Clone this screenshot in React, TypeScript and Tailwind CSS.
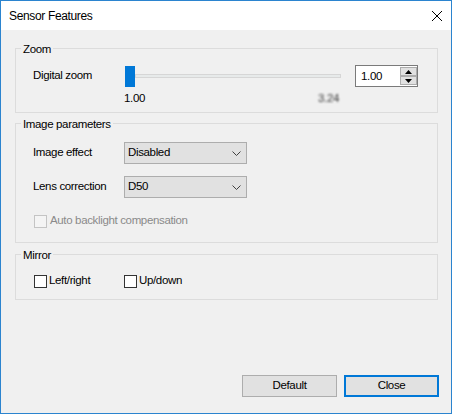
import { ReactNode } from 'react';

const FONT = "font-['Liberation_Sans',Arial,sans-serif] text-[11.5px] tracking-[-0.35px] text-black";

function GroupBox({ title, className, children }: { title: string; className?: string; children: ReactNode }) {
  return (
    <div className={`flex flex-col border border-[#dcdcdc] ${className ?? ''}`}>
      <div className="-mt-[8px] ml-[5px] h-4 self-start bg-[#f0f0f0] px-[2px] leading-4">{title}</div>
      {children}
    </div>
  );
}

function Chevron() {
  return (
    <svg width="9" height="5" viewBox="0 0 9 5" className="shrink-0">
      <path d="M0.5 0.5 L4.5 4.5 L8.5 0.5" fill="none" stroke="#404040" strokeWidth="1" />
    </svg>
  );
}

function Dropdown({ value }: { value: string }) {
  return (
    <div className="flex h-[22px] w-[123px] items-center justify-between border border-[#adadad] bg-[#e1e1e1] pl-[3px] pr-[5px]">
      <span>{value}</span>
      <Chevron />
    </div>
  );
}

function CheckBox({ label, disabled, gap }: { label: string; disabled?: boolean; gap: string }) {
  return (
    <div className={`flex h-4 items-center ${gap}`}>
      <div
        className={`h-[13px] w-[13px] shrink-0 border ${
          disabled ? 'border-[#c4c4c4] bg-[#f4f4f4]' : 'border-[#333333] bg-white'
        }`}
      />
      <span className={disabled ? 'text-[#8a8a8a]' : ''}>{label}</span>
    </div>
  );
}

function SpinButton({ up }: { up?: boolean }) {
  return (
    <div className="flex h-[10px] items-center justify-center border border-[#adadad] bg-[#e1e1e1]">
      <svg width="7" height="4" viewBox="0 0 7 4">
        <path d={up ? 'M0 4 L3.5 0 L7 4 Z' : 'M0 0 L3.5 4 L7 0 Z'} fill="#000" />
      </svg>
    </div>
  );
}

export default function App() {
  return (
    <div className={`flex h-[414px] w-[452px] flex-col border border-[#2b84cf] ${FONT}`}>
      <div className="flex h-[29px] shrink-0 items-center justify-between bg-white pl-[8px] pr-[9px]">
        <span className="text-[12px]">Sensor Features</span>
        <svg width="10" height="10" viewBox="0 0 10 10">
          <path d="M0 0 L10 10 M10 0 L0 10" stroke="#000" strokeWidth="1" />
        </svg>
      </div>

      <div className="flex flex-1 flex-col bg-[#f0f0f0] pl-[14px] pr-[13px]">
        <GroupBox title="Zoom" className="mt-[18px] pb-[6px]">
          <div className="mt-[8px] flex h-[22px] items-center pl-[17px]">
            <span className="w-[91px]">Digital zoom</span>
            <div className="flex w-[217px] items-center pl-[1px]">
              <div className="h-[21px] w-[10px] shrink-0 bg-[#0078d7]" />
              <div className="h-[4px] flex-1 border border-[#d6d6d6] bg-[#e7eaea]" />
            </div>
            <div className="ml-[14px] flex h-[22px] w-[63px] border border-[#7a7a7a] bg-white">
              <span className="flex-1 pl-[5px] leading-[20px]">1.00</span>
              <div className="flex w-[18px] flex-col py-[1px] pl-[1px]">
                <SpinButton up />
                <SpinButton />
              </div>
            </div>
          </div>
          <div className="mt-[3px] flex w-[325px] justify-between pl-[108px] pr-[2px] leading-4">
            <span>1.00</span>
            <span className="inline-block text-[#3a3a3a] blur-[1px]">3.24</span>
          </div>
        </GroupBox>

        <GroupBox title="Image parameters" className="mt-[10px] pb-[13px]">
          <div className="mt-[10px] flex items-center pl-[17px]">
            <span className="w-[91px]">Image effect</span>
            <Dropdown value="Disabled" />
          </div>
          <div className="mt-[12px] flex items-center pl-[17px]">
            <span className="w-[91px]">Lens correction</span>
            <Dropdown value="D50" />
          </div>
          <div className="mt-[15px] pl-[18px]">
            <CheckBox label="Auto backlight compensation" disabled gap="gap-[3px]" />
          </div>
        </GroupBox>

        <GroupBox title="Mirror" className="mt-[11px] pb-[10px]">
          <div className="mt-[10px] flex pl-[18px]">
            <div className="w-[90px]">
              <CheckBox label="Left/right" gap="gap-[2px]" />
            </div>
            <CheckBox label="Up/down" gap="gap-[2px]" />
          </div>
        </GroupBox>

        <div className="-mr-[1px] mt-auto mb-[16px] flex justify-end gap-[7px]">
          <div className="flex h-[22px] w-[95px] items-center justify-center border border-[#adadad] bg-[#e1e1e1]">
            Default
          </div>
          <div className="flex h-[22px] w-[95px] items-center justify-center border-2 border-[#0078d7] bg-[#e1e1e1]">
            Close
          </div>
        </div>
      </div>
    </div>
  );
}
